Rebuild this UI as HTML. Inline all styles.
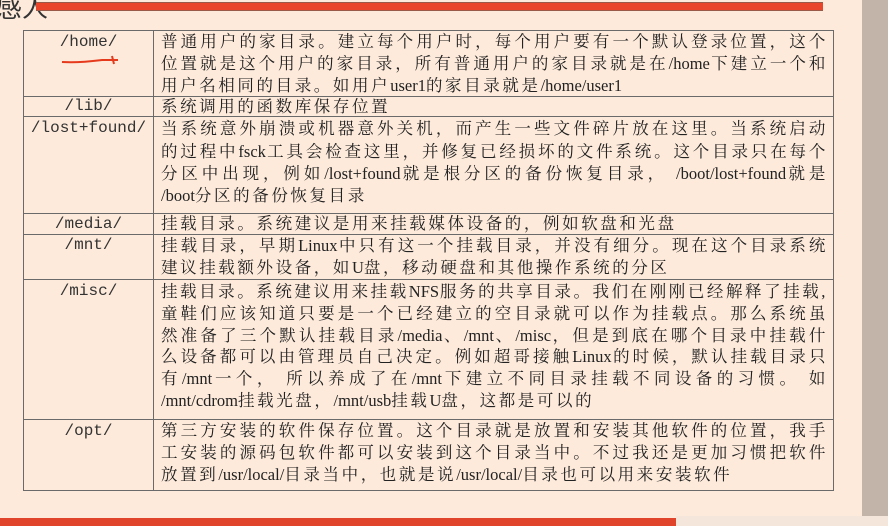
<!DOCTYPE html>
<html><head><meta charset="utf-8"><style>
html,body{margin:0;padding:0;}
body{width:888px;height:526px;background:#fdeadb;position:relative;overflow:hidden;font-family:"Liberation Serif","Noto Serif CJK SC",serif;color:#222;}
.grey{position:absolute;left:862px;top:0;width:26px;height:516px;background:#c2b4a8;}
.topbar{position:absolute;left:36px;top:2px;width:787px;height:7px;background:#e8452a;border-top:1px solid #9a5a4a;border-bottom:1px solid #9a5a4a;}
.title{position:absolute;left:-4px;top:-12px;font-size:26px;font-family:"Noto Sans CJK SC",sans-serif;color:#333;}
.botbar{position:absolute;left:0;top:518px;width:676px;height:8px;background:#e0442a;}
.botlight{position:absolute;left:676px;top:516px;width:212px;height:10px;background:#f4e6da;}
table{position:absolute;left:23px;top:30px;border-collapse:collapse;}
td{border:1px solid #6a6a6a;vertical-align:top;padding:0;}
td.l{width:129px;text-align:center;font-family:"Liberation Mono",monospace;font-size:16px;color:#333;line-height:22px;}
td.r{width:666px;padding:0 6px 0 7px;font-size:16.5px;line-height:21.8px;letter-spacing:1.6px;}
td.r span{letter-spacing:0;font-family:"Liberation Serif",serif;}
.j{text-align:justify;text-align-last:justify;white-space:nowrap;}
.n{white-space:nowrap;letter-spacing:2.6px;}
</style></head><body>
<div class="grey"></div>
<div class="title">感人</div>
<div class="topbar"></div>
<table>
<tr style="height:65px"><td class="l">/home/<br><svg width="70" height="14"><path d="M8 8 C25 9 40 7 48 6 L64 6 M58 2 L60 10" stroke="#e63a1c" stroke-width="2" fill="none"/></svg></td><td class="r">
<div class="j">普通用户的家目录。建立每个用户时，每个用户要有一个默认登录位置，这个</div>
<div class="j">位置就是这个用户的家目录，所有普通用户的家目录就是在<span>/home</span>下建立一个和</div>
<div class="n">用户名相同的目录。如用户<span>user1</span>的家目录就是<span>/home/user1</span></div></td></tr>
<tr style="height:20px"><td class="l" style="line-height:19px">/lib/</td><td class="r" style="line-height:19px"><div class="n">系统调用的函数库保存位置</div></td></tr>
<tr style="height:97px"><td class="l" style="line-height:23px">/lost+found/</td><td class="r" style="line-height:22.3px;padding-top:1px">
<div class="j">当系统意外崩溃或机器意外关机，而产生一些文件碎片放在这里。当系统启动</div>
<div class="j">的过程中<span>fsck</span>工具会检查这里，并修复已经损坏的文件系统。这个目录只在每个</div>
<div class="j">分区中出现，例如<span>/lost+found</span>就是根分区的备份恢复目录， <span>/boot/lost+found</span>就是</div>
<div class="n"><span>/boot</span>分区的备份恢复目录</div></td></tr>
<tr style="height:21px"><td class="l" style="line-height:20px">/media/</td><td class="r" style="line-height:20px"><div class="n">挂载目录。系统建议是用来挂载媒体设备的，例如软盘和光盘</div></td></tr>
<tr style="height:43px"><td class="l" style="line-height:21px">/mnt/</td><td class="r">
<div class="j">挂载目录，早期<span>Linux</span>中只有这一个挂载目录，并没有细分。现在这个目录系统</div>
<div class="n">建议挂载额外设备，如<span>U</span>盘，移动硬盘和其他操作系统的分区</div></td></tr>
<tr style="height:140px"><td class="l" style="line-height:22px">/misc/</td><td class="r" style="line-height:21.8px;padding-top:1px">
<div class="j">挂载目录。系统建议用来挂载<span>NFS</span>服务的共享目录。我们在刚刚已经解释了挂载,</div>
<div class="j">童鞋们应该知道只要是一个已经建立的空目录就可以作为挂载点。那么系统虽</div>
<div class="j">然准备了三个默认挂载目录<span>/media</span>、<span>/mnt</span>、<span>/misc</span>，但是到底在哪个目录中挂载什</div>
<div class="j">么设备都可以由管理员自己决定。例如超哥接触<span>Linux</span>的时候，默认挂载目录只</div>
<div class="j">有<span>/mnt</span>一个， 所以养成了在<span>/mnt</span>下建立不同目录挂载不同设备的习惯。 如</div>
<div class="n"><span>/mnt/cdrom</span>挂载光盘，<span>/mnt/usb</span>挂载<span>U</span>盘，这都是可以的</div></td></tr>
<tr style="height:71px"><td class="l" style="line-height:22px">/opt/</td><td class="r">
<div class="j">第三方安装的软件保存位置。这个目录就是放置和安装其他软件的位置，我手</div>
<div class="j">工安装的源码包软件都可以安装到这个目录当中。不过我还是更加习惯把软件</div>
<div class="n">放置到<span>/usr/local/</span>目录当中，也就是说<span>/usr/local/</span>目录也可以用来安装软件</div></td></tr>
</table>
<div class="botbar"></div>
<div class="botlight"></div>
</body></html>
